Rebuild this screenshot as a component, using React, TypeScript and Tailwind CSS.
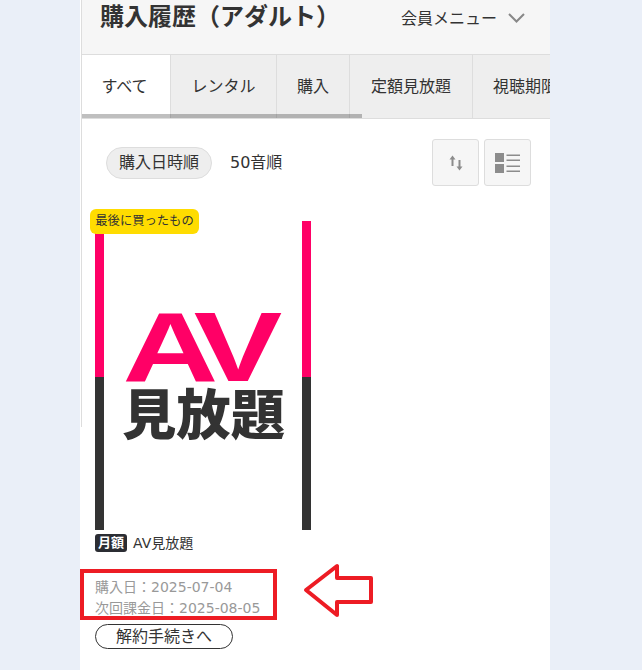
import React from 'react';

const jp = { fontFamily: '"DejaVu Sans", "Noto Sans CJK JP", sans-serif' };

const tabs = [
  { label: 'レンタル', width: 'w-[106px]' },
  { label: '購入', width: 'w-[73px]' },
  { label: '定額見放題', width: 'w-[123px]' },
  { label: '視聴期限', width: 'w-[105px]' },
];

// poster image of the plan
const PlanLogo = () => (
  <svg viewBox="0 0 216 309" className="block w-[216px] h-[309px]">
    <rect width="216" height="309" fill="#ffffff" />
    <rect x="0" y="0" width="9" height="156" fill="#ff0066" />
    <rect x="207" y="0" width="9" height="156" fill="#ff0066" />
    <rect x="0" y="156" width="9" height="153" fill="#333333" />
    <rect x="207" y="156" width="9" height="153" fill="#333333" />
    <text
      transform="translate(27.5 160) scale(1.34 1)"
      fontSize="99"
      fontWeight="700"
      fill="#ff0066"
      letterSpacing="-11"
      style={{ fontFamily: '"Liberation Sans", sans-serif' }}
    >
      AV
    </text>
    <text
      x="27"
      y="214"
      fontSize="54"
      fontWeight="900"
      fill="#333333"
      textLength="163"
      lengthAdjust="spacingAndGlyphs"
      style={{ fontFamily: '"Noto Sans CJK JP", sans-serif' }}
    >
      見放題
    </text>
  </svg>
);

const SortIcon = () => (
  <svg viewBox="0 0 14 16" className="w-[14px] h-[16px]" fill="#8c8c8c">
    <path d="M3.5 0.5 L6.5 4.5 H4.5 V11 H2.5 V4.5 H0.5 Z" />
    <path d="M10.5 15.5 L13.5 11.5 H11.5 V5 H9.5 V11.5 H7.5 Z" />
  </svg>
);

const ListIcon = () => (
  <svg viewBox="0 0 25 20" className="w-[25px] h-[20px]" fill="#8c8c8c">
    <rect x="0" y="0" width="9" height="9" />
    <rect x="0" y="11" width="9" height="9" />
    <rect x="11.5" y="1.5" width="13.5" height="1.5" />
    <rect x="11.5" y="6.5" width="13.5" height="1.5" />
    <rect x="11.5" y="12.5" width="13.5" height="1.5" />
    <rect x="11.5" y="17.5" width="13.5" height="1.5" />
  </svg>
);

export default function App() {
  return (
    <div className="h-[670px] overflow-hidden bg-[#eaeff8] pl-[80px] pr-[92px]" style={jp}>
      <div className="relative h-full w-[470px] bg-white border-l border-white text-[#333333]">
        <div className="absolute left-0 top-0 z-10 w-px h-[427px] bg-[#dddddd]" />

        {/* Header */}
        <div className="h-[55px] bg-[#f6f6f6] border-b border-[#dddddd] flex justify-between pl-[19px] pr-[25px]">
          <h1 className="text-[24px] leading-[34px] font-bold">購入履歴（アダルト）</h1>
          <div className="flex items-start gap-[11px] pt-[9px] text-[16px] leading-[20px]">
            <span>会員メニュー</span>
            <svg viewBox="0 0 17 10" className="w-[17px] h-[10px] mt-[4px]" fill="none" stroke="#888888" strokeWidth="2">
              <path d="M1 1 L8.5 8.5 L16 1" />
            </svg>
          </div>
        </div>

        {/* Tabs */}
        <div className="relative h-[64px] border-b border-[#dddddd] overflow-hidden">
          <div className="flex h-full w-max">
            <div className="w-[87px] flex items-center justify-center bg-white text-[16px] mr-[2px]">すべて</div>
            {tabs.map((tab) => (
              <div
                key={tab.label}
                className={`${tab.width} flex items-center justify-center bg-[#eeeeee] border-l border-[#dddddd] text-[16px] whitespace-nowrap`}
              >
                {tab.label}
              </div>
            ))}
          </div>
          <div className="absolute left-0 bottom-0 w-[281px] h-[4px] bg-black/25" />
        </div>

        {/* Sort row */}
        <div className="flex items-center justify-between pl-[25px] pr-[19px] pt-[20px]">
          <div className="flex items-center gap-[18px] text-[16px] mt-[1px]">
            <span className="h-[32px] w-[106px] flex items-center justify-center rounded-full bg-[#eeeeee] border border-[#dddddd] pb-[1px]">
              購入日時順
            </span>
            <span className="pb-[1px]">50音順</span>
          </div>
          <div className="flex gap-[5px]">
            <button className="w-[47px] h-[47px] flex items-center justify-center bg-[#f6f6f6] border border-[#dddddd] rounded-[3px]">
              <SortIcon />
            </button>
            <button className="w-[47px] h-[47px] flex items-center justify-center bg-[#f6f6f6] border border-[#dddddd] rounded-[3px]">
              <ListIcon />
            </button>
          </div>
        </div>

        {/* Item */}
        <div className="pl-[14px] pt-[35px]">
          <div className="relative w-[216px]">
            <span className="absolute -left-[5px] -top-[12px] w-[109px] h-[25px] flex items-center justify-center rounded-[6px] bg-[#ffdc00] text-[12.3px]">
              最後に買ったもの
            </span>
            <PlanLogo />
          </div>
          <div className="flex items-center gap-[6px] mt-[4px] h-[18px] text-[14px]">
            <span className="w-[32px] h-[18px] flex items-center justify-center rounded-[3px] bg-[#2b2d33] text-white text-[13px] font-bold">
              月額
            </span>
            <span>AV見放題</span>
          </div>
          <div className="mt-[25px] text-[14px] leading-[21px] text-[#999999]">
            <p>購入日：2025-07-04</p>
            <p>次回課金日：2025-08-05</p>
          </div>
          <button className="mt-[5px] w-[138px] h-[25px] flex items-center justify-center rounded-full border border-[#333333] bg-white text-[16px]">
            解約手続きへ
          </button>
        </div>

        {/* Red annotation */}
        <div className="absolute left-[-1px] top-[569px] w-[197px] h-[51px] border-[4px] border-[#ed1c24]" />
        <svg viewBox="0 0 76 60" className="absolute left-[219px] top-[560px] w-[76px] h-[60px]">
          <path
            d="M6 30 L37 6 L37 18 L71 18 L71 42 L37 42 L37 55 Z"
            fill="#ffffff"
            stroke="#ed1c24"
            strokeWidth="4"
            strokeLinejoin="round"
          />
        </svg>
      </div>
    </div>
  );
}
